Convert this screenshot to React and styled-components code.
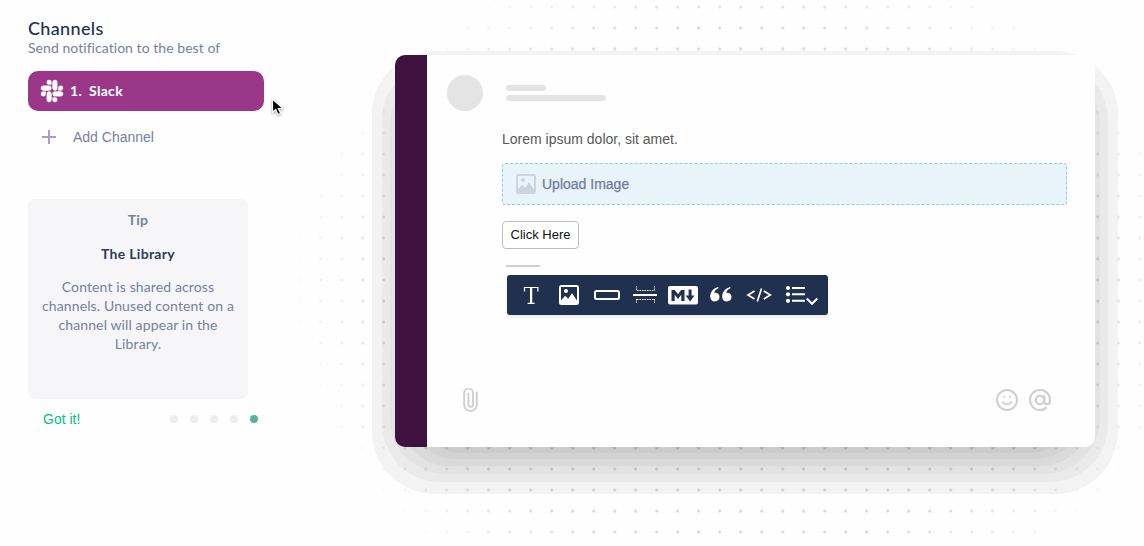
import React from 'react';
import styled, { createGlobalStyle } from 'styled-components';

const brand = "Lato, 'Open Sans', sans-serif";
const ui = "'Liberation Sans', Arial, sans-serif";

const GlobalStyle = createGlobalStyle`
  *, *::before, *::after { box-sizing: border-box; }
  body { margin: 0; background: #fefefe; overflow: hidden; }
`;

const Page = styled.div`
  position: relative;
  display: flex;
  width: 1144px;
  height: 546px;
  overflow: hidden;
  font-family: ${brand};
`;

const Backdrop = styled.svg`
  position: absolute;
  inset: 0;
`;

const Sidebar = styled.aside`
  position: relative;
  width: 395px;
  padding: 17px 0 0 28px;
`;

const Title = styled.h1`
  margin: 0;
  font-size: 18px;
  font-weight: 500;
  line-height: 22px;
  letter-spacing: 0.35px;
  color: #22304e;
`;

const Subtitle = styled.p`
  margin: 0;
  font-size: 14px;
  line-height: 18px;
  letter-spacing: 0.05px;
  color: #76819e;
`;

const ChannelButton = styled.button`
  display: flex;
  align-items: center;
  width: 236px;
  height: 40px;
  margin: 14px 0 0;
  padding: 0 13px;
  border: 0;
  border-radius: 10px;
  background: #9b3788;
  color: #fff;
  font: 700 14px ${brand};
  letter-spacing: 0.3px;
`;

const ChannelLabel = styled.span`
  display: flex;
  gap: 7px;
  padding: 0 0 1px 7px;
`;

const AddChannel = styled.button`
  display: flex;
  align-items: center;
  gap: 16px;
  margin: 16px 0 0 13px;
  padding: 0;
  height: 20px;
  border: 0;
  background: none;
  color: #76819e;
  font: 14px ${ui};
`;

const TipCard = styled.section`
  width: 220px;
  height: 200px;
  margin-top: 52px;
  padding: 11px 8px 0;
  border-radius: 8px;
  background: #f6f6f9;
  text-align: center;
  color: #76819e;
`;

const TipLabel = styled.div`
  font-size: 14px;
  font-weight: 700;
  line-height: 20px;
  letter-spacing: 0.3px;
`;

const TipTitle = styled.h2`
  margin: 14px 0 13px;
  font-size: 14px;
  font-weight: 700;
  line-height: 20px;
  letter-spacing: 0.3px;
  color: #2d3c5c;
`;

const TipText = styled.p`
  margin: 0;
  font-size: 14px;
  line-height: 19px;
  letter-spacing: 0.12px;
`;

const TipFooter = styled.footer`
  display: flex;
  align-items: center;
  justify-content: space-between;
  width: 230px;
  height: 20px;
  margin-top: 10px;
  padding-left: 15px;
`;

const GotIt = styled.button`
  padding: 0;
  border: 0;
  background: none;
  color: #00c08b;
  font: 14px ${ui};
`;

const Steps = styled.div`
  display: flex;
  gap: 12px;
`;

const Step = styled.span`
  width: 8px;
  height: 8px;
  border-radius: 50%;
  background: ${(p) => (p.$active ? '#57b09a' : '#ececf2')};
`;

const Pointer = styled.svg`
  position: absolute;
  left: 270px;
  top: 97px;
  filter: drop-shadow(0 1px 1px rgba(0, 0, 0, 0.35));
`;

const Message = styled.main`
  position: relative;
  display: flex;
  width: 700px;
  height: 392px;
  margin-top: 55px;
  border-radius: 10px;
  overflow: hidden;
  background: #fefefe;
  font-family: ${ui};
`;

const Rail = styled.div`
  width: 32px;
  background: #3f113e;
`;

const Body = styled.div`
  flex: 1;
  display: flex;
  flex-direction: column;
  padding: 20px 28px 0 20px;
`;

const Sender = styled.header`
  display: flex;
  gap: 23px;
  height: 36px;
`;

const Avatar = styled.div`
  width: 36px;
  height: 36px;
  border-radius: 50%;
  background: #e4e4e4;
`;

const SenderLines = styled.div`
  display: flex;
  flex-direction: column;
  gap: 4px;
  padding-top: 10px;
`;

const Line = styled.span`
  width: ${(p) => p.$width}px;
  height: 6px;
  border-radius: 3px;
  background: #e4e4e4;
`;

const Blocks = styled.div`
  display: flex;
  flex-direction: column;
  align-items: flex-start;
  padding: 18px 0 0 55px;
`;

const Paragraph = styled.p`
  margin: 0;
  font-size: 14px;
  line-height: 20px;
  color: #585858;
`;

const Upload = styled.div`
  display: flex;
  align-items: center;
  align-self: stretch;
  gap: 6px;
  height: 42px;
  margin-top: 14px;
  padding-left: 13px;
  border: 1px dashed #8fcdec;
  border-radius: 3px;
  background: #e8f3fa;
  color: #6f7da0;
  font-size: 14px;
  -webkit-text-stroke: 0.25px #6f7da0;
`;

const ActionButton = styled.button`
  width: 77px;
  height: 28px;
  margin-top: 16px;
  padding: 0 0 2px;
  border: 1px solid #bdbdbd;
  border-radius: 4px;
  background: #fff;
  color: #111;
  font: 13px ${ui};
`;

const Caret = styled.div`
  width: 34px;
  height: 2px;
  margin: 16px 0 0 4px;
  background: #d0d0d0;
`;

const Toolbar = styled.div`
  width: 321px;
  height: 40px;
  margin: 8px 0 0 5px;
  border-radius: 3px;
  background: #20304f;
  box-shadow: 0 3px 3px rgba(0, 0, 0, 0.07);
`;

const Composer = styled.footer`
  display: flex;
  align-items: center;
  gap: 9px;
  height: 28px;
  margin-top: auto;
  margin-bottom: 33px;
  padding: 0 15px 0 14px;
`;

const Spacer = styled.span`
  flex: 1;
`;

const layers = [
  [372, 51, 494, 63, '#f3f3f3'],
  [382, 62, 482, 58, '#eaeaea'],
  [390, 69, 474, 56, '#e3e3e3'],
  [397, 76, 466.3, 54, '#dadada'],
  [404, 83, 459, 52, '#d3d3d3'],
  [411, 90, 452.7, 50, '#cbcbcb'],
];

function DotField() {
  return (
    <Backdrop width="1144" height="546" aria-hidden="true">
      <defs>
        <pattern id="dots" x="352.2" y="-3.5" width="21" height="21" patternUnits="userSpaceOnUse">
          <circle cx="10.5" cy="10.5" r="1.35" fill="#000" fillOpacity="0.19" />
        </pattern>
        <radialGradient id="fade" gradientUnits="userSpaceOnUse" cx="0" cy="0" r="1" gradientTransform="translate(740 290) scale(452 350)">
          <stop offset="0.76" stopColor="#fff" />
          <stop offset="1" stopColor="#000" />
        </radialGradient>
        <mask id="vignette" maskUnits="userSpaceOnUse" x="0" y="0" width="1144" height="546">
          <rect width="1144" height="546" fill="url(#fade)" />
        </mask>
      </defs>
      {layers.map(([x, top, bottom, r, fill]) => (
        <rect key={fill} x={x} y={top} width={1490 - 2 * x} height={bottom - top} rx={r} fill={fill} />
      ))}
      <rect width="1144" height="546" fill="url(#dots)" mask="url(#vignette)" />
    </Backdrop>
  );
}

function SlackIcon() {
  return (
    <svg width="22" height="22" viewBox="0 0 24 24" fill="#fff" stroke="#fff" strokeWidth="0.5" overflow="visible">
      <path d="M5.042 15.165a2.528 2.528 0 0 1-2.52 2.523A2.528 2.528 0 0 1 0 15.165a2.527 2.527 0 0 1 2.522-2.52h2.52v2.52zM6.313 15.165a2.527 2.527 0 0 1 2.521-2.52 2.527 2.527 0 0 1 2.521 2.52v6.313A2.528 2.528 0 0 1 8.834 24a2.528 2.528 0 0 1-2.521-2.522v-6.313zM8.834 5.042a2.528 2.528 0 0 1-2.521-2.52A2.528 2.528 0 0 1 8.834 0a2.528 2.528 0 0 1 2.521 2.522v2.52H8.834zM8.834 6.313a2.528 2.528 0 0 1 2.521 2.521 2.528 2.528 0 0 1-2.521 2.521H2.522A2.528 2.528 0 0 1 0 8.834a2.528 2.528 0 0 1 2.522-2.521h6.312zM18.956 8.834a2.528 2.528 0 0 1 2.522-2.521A2.528 2.528 0 0 1 24 8.834a2.528 2.528 0 0 1-2.522 2.521h-2.522V8.834zM17.688 8.834a2.528 2.528 0 0 1-2.523 2.521 2.527 2.527 0 0 1-2.52-2.521V2.522A2.527 2.527 0 0 1 15.165 0a2.528 2.528 0 0 1 2.523 2.522v6.312zM15.165 18.956a2.528 2.528 0 0 1 2.523 2.522A2.528 2.528 0 0 1 15.165 24a2.527 2.527 0 0 1-2.52-2.522v-2.522h2.52zM15.165 17.688a2.527 2.527 0 0 1-2.52-2.523 2.526 2.526 0 0 1 2.52-2.52h6.313A2.527 2.527 0 0 1 24 15.165a2.528 2.528 0 0 1-2.522 2.523h-6.313z" />
    </svg>
  );
}

function PictureShape({ color, hole }) {
  return (
    <g>
      <rect width="20" height="20" rx="2.5" fill={color} />
      <path d="M2 2h16v13.5l-5-7.2-3.8 5.4-3-3L2 15.2z" fill={hole} />
      <circle cx="7" cy="6" r="2" fill={color} />
    </g>
  );
}

const ToolSvg = styled.svg`
  display: block;
`;

function Tools() {
  return (
    <ToolSvg width="321" height="40" fill="none" stroke="#fff">
      <path d="M17.5 16.5V12.5h13.4v4M20.6 28.3h7" strokeWidth="1.2" />
      <path d="M24.1 12v16" strokeWidth="2.3" />
      <g transform="translate(52 10)" stroke="none"><PictureShape color="#fff" hole="#20304f" /></g>
      <rect x="88" y="16" width="24" height="8" rx="1.5" strokeWidth="2" />
      <path d="M126 20h24" strokeWidth="2" />
      <path d="M129.5 11v5M147.5 11v5M129.5 24v5M147.5 24v5M130 15.5h18M130 24.5h18" strokeWidth="1" strokeDasharray="1.5 1" />
      <rect x="161" y="11" width="30" height="18.5" rx="2" fill="#fff" stroke="none" />
      <path d="M164.5 26V15h3.2l3.3 4.3 3.2-4.3h3.3v11h-3.2v-6.2l-3.3 4.1-3.3-4.1V26zM181.6 14.5h3v6h3l-4.5 6-4.5-6h3z" fill="#20304f" stroke="none" />
      {[203, 215].map((x) => (
        <path key={x} transform={`translate(${x} 12)`} d="M8 0C3 1.5.2 5 .2 9.7c0 3 1.9 4.8 4.7 4.8 2.7 0 4.6-1.9 4.6-4.4 0-2.6-1.7-4.3-4.1-4.3-.5 0-1 .1-1.3.2C4.7 3.8 6.3 2 8.6 1z" fill="#fff" stroke="none" />
      ))}
      <path d="M247.5 16l-6.5 4 6.5 4M256.8 16l6.5 4-6.5 4M254.5 13.5l-4.2 13" strokeWidth="1.7" />
      <g fill="#fff" stroke="none">
        <circle cx="281" cy="13" r="2.1" /><circle cx="281" cy="19.3" r="2.1" /><circle cx="281" cy="25.8" r="2.1" />
      </g>
      <path d="M285 13h13M285 19.3h13M285 25.8h13" strokeWidth="2" />
      <path d="M299.8 23.5l5.2 5.3 5.3-5.3" strokeWidth="2" />
    </ToolSvg>
  );
}

export default function App() {
  return (
    <Page>
      <GlobalStyle />
      <DotField />
      <Sidebar>
        <Title>Channels</Title>
        <Subtitle>Send notification to the best of</Subtitle>
        <ChannelButton>
          <SlackIcon />
          <ChannelLabel>
            <span>1.</span>
            <span>Slack</span>
          </ChannelLabel>
        </ChannelButton>
        <AddChannel>
          <svg width="16" height="16" stroke="#ab9bd0" strokeWidth="2">
            <path d="M8 1v14M1 8h14" />
          </svg>
          Add Channel
        </AddChannel>
        <TipCard>
          <TipLabel>Tip</TipLabel>
          <TipTitle>The Library</TipTitle>
          <TipText>
            Content is shared across<br />channels. Unused content on a<br />channel will appear in the<br />Library.
          </TipText>
        </TipCard>
        <TipFooter>
          <GotIt>Got it!</GotIt>
          <Steps>
            {[0, 1, 2, 3, 4].map((i) => <Step key={i} $active={i === 4} />)}
          </Steps>
        </TipFooter>
        <Pointer width="16" height="21" viewBox="0 0 16 21">
          <path d="M2.5 2v13.5l3.2-3 2.2 5 2.7-1.2-2.2-4.8H13z" fill="#000" stroke="#fff" strokeWidth="1.2" />
        </Pointer>
      </Sidebar>
      <Message>
        <Rail />
        <Body>
          <Sender>
            <Avatar />
            <SenderLines>
              <Line $width={40} />
              <Line $width={100} />
            </SenderLines>
          </Sender>
          <Blocks>
            <Paragraph>Lorem ipsum dolor, sit amet.</Paragraph>
            <Upload>
              <svg width="20" height="20" viewBox="0 0 20 20"><PictureShape color="#cbd4df" hole="#e8f3fa" /></svg>
              Upload Image
            </Upload>
            <ActionButton>Click Here</ActionButton>
            <Caret />
            <Toolbar><Tools /></Toolbar>
          </Blocks>
          <Composer>
            <svg width="18" height="28" fill="none" stroke="#d0d0d0" strokeWidth="1.9" strokeLinecap="round">
              <path d="M15.8 6.5v12.2a6.3 6.3 0 0 1-12.6 0V7a4.4 4.4 0 0 1 8.8 0v11.5a2.3 2.3 0 0 1-4.6 0V7.5" />
            </svg>
            <Spacer />
            <svg width="24" height="24" fill="none" stroke="#d0d0d0" strokeWidth="2" strokeLinecap="round">
              <circle cx="12" cy="12" r="10" />
              <path d="M7.8 14.2c1.7 2.7 6.7 2.7 8.4 0" />
              <path d="M9 9h.01M15 9h.01" />
            </svg>
            <svg width="24" height="24" fill="none" stroke="#d0d0d0" strokeWidth="2.2" strokeLinecap="round">
              <circle cx="12" cy="12" r="4.2" />
              <path d="M16.3 7.8v5.4a2.8 2.8 0 0 0 5.7 0V12a10 10 0 1 0-4 8" />
            </svg>
          </Composer>
        </Body>
      </Message>
    </Page>
  );
}
